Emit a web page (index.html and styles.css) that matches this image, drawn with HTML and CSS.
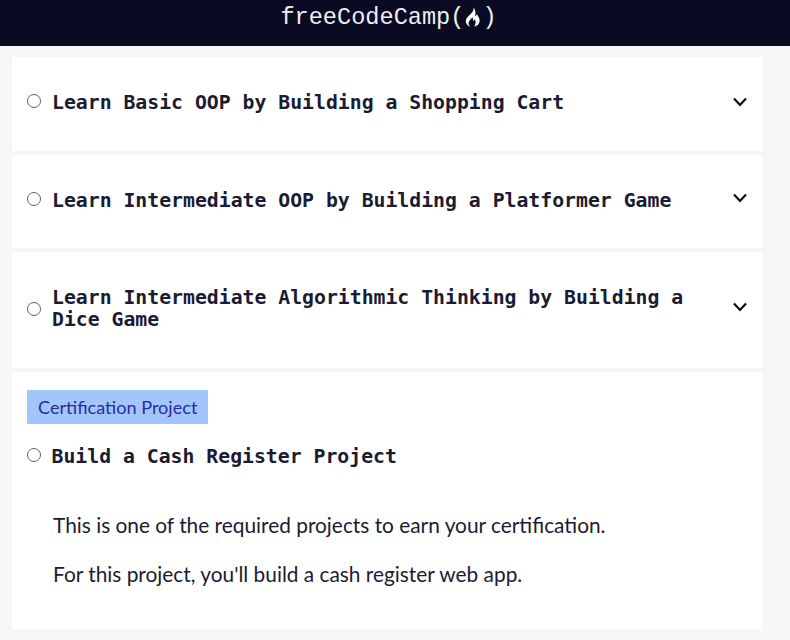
FILE: index.html
```html
<!DOCTYPE html>
<html lang="en">
<head>
  <meta charset="UTF-8" />
  <title>freeCodeCamp</title>
  <link rel="stylesheet" href="styles.css">
</head>
<body>
  <header>
    <div class="logo">
      <span>freeCodeCamp(</span><svg class="flame" viewBox="0 0 16 20" width="16" height="20"><path fill-rule="evenodd" d="M8.500 0.500c0.600 2.700-0.800 4.300-2.400 6C4.200 8.500 1.200 10.500 0.800 13.500c-0.300 2.700 1.500 5.200 4.500 6.200-1.600-1.300-2.200-3.200-1.300-5.100 0.800-1.600 2.300-2.500 3.100-4.400 1 1.100 1.100 2.400 0.900 3.600 0.900-0.200 1.500-0.800 1.700-1.600 1.300 1.700 1.400 4.300-0.500 7.500 3.300-0.800 5.500-3.100 5.400-6.200-0.100-2.700-1.700-4.400-2.800-6.200-0.400 1-1 1.500-1.800 1.700C10.700 6.200 10.900 3 8.500 0.500z" fill="#fff"/></svg><span>)</span>
    </div>
  </header>

  <main>
    <section class="card row">
      <span class="radio"></span>
      <h3>Learn Basic OOP by Building a Shopping Cart</h3>
      <svg class="chevron" viewBox="0 0 16 12" width="16" height="12"><path d="M2 2.500l6 6.500 6-6.500" fill="none" stroke="#0a0a23" stroke-width="2.200"/></svg>
    </section>
    <section class="card row short">
      <span class="radio"></span>
      <h3>Learn Intermediate OOP by Building a Platformer Game</h3>
      <svg class="chevron" viewBox="0 0 16 12" width="16" height="12"><path d="M2 2.500l6 6.500 6-6.500" fill="none" stroke="#0a0a23" stroke-width="2.200"/></svg>
    </section>
    <section class="card row tall">
      <span class="radio"></span>
      <h3>Learn Intermediate Algorithmic Thinking by Building a Dice Game</h3>
      <svg class="chevron" viewBox="0 0 16 12" width="16" height="12"><path d="M2 2.500l6 6.500 6-6.500" fill="none" stroke="#0a0a23" stroke-width="2.200"/></svg>
    </section>
    <section class="card project">
      <div class="badge">Certification Project</div>
      <div class="project-title">
        <span class="radio"></span>
        <h3>Build a Cash Register Project</h3>
      </div>
      <div class="description">
        <p>This is one of the required projects to earn your certification.</p>
        <p>For this project, you'll build a cash register web app.</p>
      </div>
    </section>
  </main>
</body>
</html>
```

FILE: styles.css
```css
body {
  margin: 0;
  background-color: #f5f6f7;
  color: #1b1b32;
  font-family: 'Lato', sans-serif;
}

header {
  height: 46px;
  background-color: #0a0a23;
  display: flex;
  justify-content: center;
}

.logo {
  display: flex;
  align-items: center;
  height: 34px;
  margin-left: -13px;
  color: #eeeef2;
  font-family: 'Liberation Mono', monospace;
  font-size: 23.600px;
}

.flame {
  margin: 0 1px;
}

main {
  width: 750px;
  margin: 11px 0 10px 12px;
  display: flex;
  flex-direction: column;
  gap: 4px;
}

.card {
  background-color: #fff;
  padding: 0 15px;
}

.row {
  height: 94px;
  display: flex;
  align-items: flex-start;
  gap: 11px;
  padding-top: 33px;
  box-sizing: border-box;
}

.row.short {
  height: 93px;
}

.row.tall {
  height: 116px;
  padding-top: 32px;
  align-items: center;
  padding-bottom: 36px;
}

h3 {
  margin: 0;
  padding-top: 2px;
  flex: 1;
  font-family: 'DejaVu Sans Mono', monospace;
  font-size: 19.800px;
  font-weight: bold;
  line-height: 22px;
}

.radio {
  width: 12px;
  height: 12px;
  flex: none;
  margin-top: 4px;
  border: 1px solid #5f5f6e;
  border-radius: 50%;
}

.row.tall .radio {
  margin-top: 2px;
}

.chevron {
  flex: none;
  margin: 6px -1px 0 0;
}

.row.short .chevron {
  margin-top: 4px;
}

.row.tall .chevron {
  margin: 0 -1px 2px 0;
}

.project {
  height: 258px;
  padding-top: 18px;
  box-sizing: border-box;
}

.badge {
  display: inline-block;
  padding: 0 11px;
  height: 34px;
  line-height: 34px;
  background-color: #a2c6fb;
  color: #2a2a9e;
  font-size: 18.100px;
}

.project-title {
  display: flex;
  align-items: flex-start;
  gap: 10.500px;
  margin-top: 20px;
}

.description {
  margin: 42px 0 0 26px;
  font-size: 20.850px;
}

.description p {
  margin: 0 0 19px;
  line-height: 30px;
}
```
